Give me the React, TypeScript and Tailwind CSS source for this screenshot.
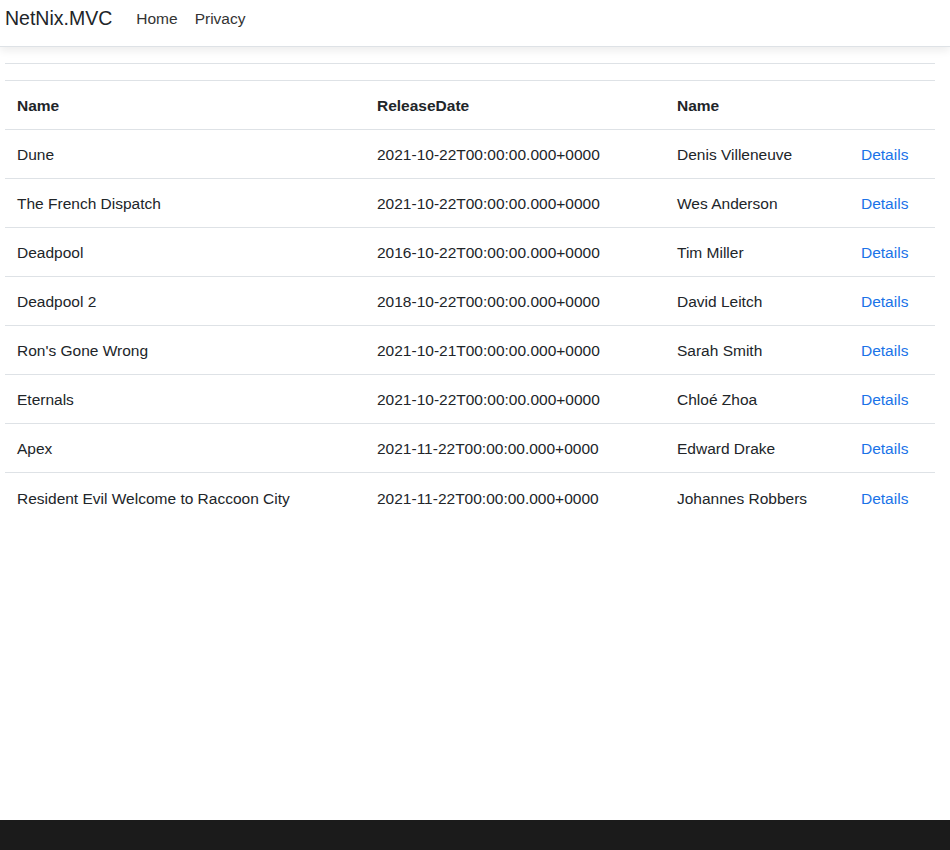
import React from 'react';

type Movie = {
  name: string;
  releaseDate: string;
  director: string;
};

const movies: Movie[] = [
  { name: 'Dune', releaseDate: '2021-10-22T00:00:00.000+0000', director: 'Denis Villeneuve' },
  { name: 'The French Dispatch', releaseDate: '2021-10-22T00:00:00.000+0000', director: 'Wes Anderson' },
  { name: 'Deadpool', releaseDate: '2016-10-22T00:00:00.000+0000', director: 'Tim Miller' },
  { name: 'Deadpool 2', releaseDate: '2018-10-22T00:00:00.000+0000', director: 'David Leitch' },
  { name: "Ron's Gone Wrong", releaseDate: '2021-10-21T00:00:00.000+0000', director: 'Sarah Smith' },
  { name: 'Eternals', releaseDate: '2021-10-22T00:00:00.000+0000', director: 'Chloé Zhoa' },
  { name: 'Apex', releaseDate: '2021-11-22T00:00:00.000+0000', director: 'Edward Drake' },
  { name: 'Resident Evil Welcome to Raccoon City', releaseDate: '2021-11-22T00:00:00.000+0000', director: 'Johannes Robbers' },
];

export default function App() {
  return (
    <div className="min-h-[850px] flex flex-col bg-white text-[#212529] font-['Liberation_Sans',Arial,sans-serif] text-[15.5px]">
      {/* Navbar */}
      <header className="h-[47px] border-b border-[#dee2e6] shadow-[0_4px_8px_rgba(0,0,0,0.07)] bg-white">
        <nav className="h-full flex items-center px-[5px]">
          <span className="text-[19.5px] text-[#212529] mr-[24px] -mt-[8px]">NetNix.MVC</span>
          <div className="flex items-center gap-[17px] -mt-[8px]">
            <a className="text-[#333]">Home</a>
            <a className="text-[#333]">Privacy</a>
          </div>
        </nav>
      </header>

      {/* Main */}
      <main className="flex-1 px-[5px] pt-[16px]">
        <div className="w-[930px] border-t border-[#dee2e6] mb-[16px]" />
        <table className="w-[930px] border-collapse">
          <thead>
            <tr className="h-[49px]">
              <th className="w-[360px] border-t border-[#dee2e6] px-[12px] pt-[2px] text-left font-bold">Name</th>
              <th className="w-[300px] border-t border-[#dee2e6] px-[12px] pt-[2px] text-left font-bold">ReleaseDate</th>
              <th className="w-[184px] border-t border-[#dee2e6] px-[12px] pt-[2px] text-left font-bold">Name</th>
              <th className="border-t border-[#dee2e6] px-[12px]"></th>
            </tr>
          </thead>
          <tbody>
            {movies.map((movie) => (
              <tr key={movie.name} className="h-[49px]">
                <td className="border-t border-[#dee2e6] px-[12px] pt-[2px]">{movie.name}</td>
                <td className="border-t border-[#dee2e6] px-[12px] pt-[2px]">{movie.releaseDate}</td>
                <td className="border-t border-[#dee2e6] px-[12px] pt-[2px]">{movie.director}</td>
                <td className="border-t border-[#dee2e6] px-[12px] pt-[2px]">
                  <a className="text-[#1a73e8]">Details</a>
                </td>
              </tr>
            ))}
          </tbody>
        </table>
      </main>

      {/* Footer */}
      <footer className="h-[30px] bg-[#1b1b1b]" />
    </div>
  );
}
